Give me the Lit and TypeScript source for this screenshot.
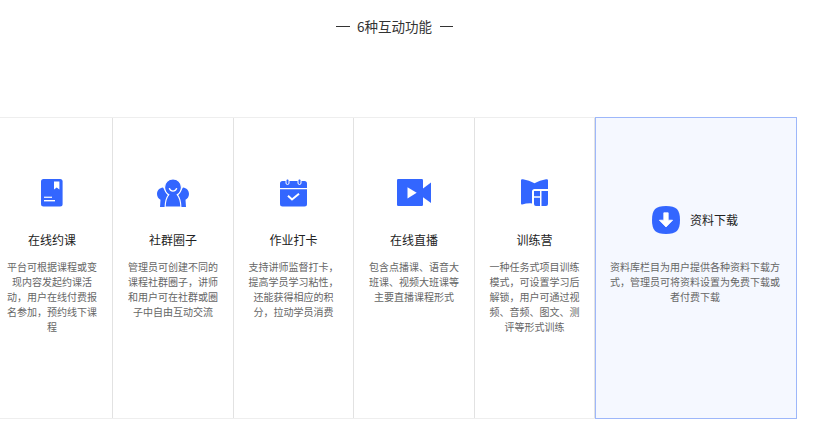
import { LitElement, html, css } from "lit";
import { customElement } from "lit/decorators.js";

const B = "#3366ff";

const icons = {
  book: html`<svg class="ic" width="22" height="28" viewBox="0 0 22 28">
    <rect x="0" y="0" width="21.6" height="27.5" rx="2.5" fill="${B}"></rect>
    <path d="M13 2.500h5.400v8l-2.700-2-2.700 2z" fill="#fff"></path>
    <rect x="3" y="17.600" width="8" height="1.400" fill="#e3eaff"></rect>
    <rect x="3" y="21" width="11" height="1.400" fill="#fff"></rect>
  </svg>`,
  group: html`<svg class="ic" width="32" height="28" viewBox="0 0 32 28">
    <path d="M6 8.500C2.500 8.800 0 11.600 0 15c0 2.600 1.400 4.700 3.500 5.800L3 28h8l1-10z" fill="${B}"></path>
    <path d="M26 8.500c3.500.3 6 3.100 6 6.500 0 2.600-1.400 4.700-3.500 5.800L29 28h-8l-1-10z" fill="${B}"></path>
    <path d="M16 0c4.800 0 8.400 3.700 8.400 8.200 0 3.300-1.700 6-4.200 7.500 2.100 2.500 3.500 6.800 3.700 12.300H8.100c.2-5.500 1.600-9.800 3.700-12.300-2.500-1.500-4.200-4.200-4.200-7.500C7.600 3.700 11.200 0 16 0z" fill="${B}" stroke="#fff" stroke-width="1.100"></path>
    <path d="M12.400 9.600c.7 1.700 2 2.500 3.600 2.500s2.900-.8 3.600-2.500" fill="none" stroke="#fff" stroke-width="1.300" stroke-linecap="round"></path>
  </svg>`,
  calendar: html`<svg class="ic" width="27" height="28" viewBox="0 0 27 28">
    <path d="M2.500 2h22A2.500 2.500 0 0 1 27 4.500V9H0V4.500A2.500 2.500 0 0 1 2.500 2z" fill="${B}"></path>
    <path d="M0 10.200h27V25a2.500 2.500 0 0 1-2.500 2.500h-22A2.500 2.500 0 0 1 0 25z" fill="${B}"></path>
    <rect x="6" y="0" width="3" height="5.500" rx="1.500" fill="${B}" stroke="#fff" stroke-width="1"></rect>
    <rect x="18" y="0" width="3" height="5.500" rx="1.500" fill="${B}" stroke="#fff" stroke-width="1"></rect>
    <path d="M8 16.800l4 3.700 7-5.800" fill="none" stroke="#fff" stroke-width="2"></path>
  </svg>`,
  video: html`<svg class="ic" width="34" height="28" viewBox="0 0 34 28">
    <rect x="0" y="0" width="26" height="27" rx="1.200" fill="${B}"></rect>
    <path d="M25 10.200L34 3.500v20.500l-9-6.500z" fill="${B}"></path>
    <path d="M10.500 8.200l9.200 5.600-9.200 5.600z" fill="#fff"></path>
  </svg>`,
  map: html`<svg class="ic" width="27" height="28" viewBox="0 0 27 28">
    <path d="M0 1.500C0 .3 1 0 2 .3c4 .8 8 2 11.500 4C17 2.300 21 1.100 25 .3c1-.3 2 0 2 1.200V10H13.500c-1.500 0-2.500 1-2.500 2.500V24.500C7.800 24 4.500 24.700 1.200 25.500.5 25.700 0 25 0 24.200z" fill="${B}"></path>
    <path d="M13 12h6v5.200h-6zM20.500 12H27v13a2 2 0 0 1-2 2h-4.500zM13 18.800h6V27h-4a2 2 0 0 1-2-2z" fill="${B}"></path>
  </svg>`,
  download: html`<svg class="ic" width="28" height="28" viewBox="0 0 28 28">
    <path d="M14 0c10.500 0 14 3.500 14 14s-3.500 14-14 14S0 24.500 0 14 3.500 0 14 0z" fill="${B}"></path>
    <path d="M11.800 6.800h4.400v7.400h4.400L14 21 7.400 14.200h4.400z" fill="#fff" stroke="#fff" stroke-linejoin="round" stroke-width="0.800"></path>
  </svg>`,
};

const items = [
  { icon: icons.book, title: "在线约课", desc: "平台可根据课程或变现内容发起约课活动，用户在线付费报名参加，预约线下课程" },
  { icon: icons.group, title: "社群圈子", desc: "管理员可创建不同的课程社群圈子，讲师和用户可在社群或圈子中自由互动交流" },
  { icon: icons.calendar, title: "作业打卡", desc: "支持讲师监督打卡，提高学员学习粘性，还能获得相应的积分，拉动学员消费" },
  { icon: icons.video, title: "在线直播", desc: "包含点播课、语音大班课、视频大班课等主要直播课程形式" },
  { icon: icons.map, title: "训练营", desc: "一种任务式项目训练模式，可设置学习后解锁，用户可通过视频、音频、图文、测评等形式训练" },
];

@customElement("app-root")
export class AppRoot extends LitElement {
  static styles = css`
    :host {
      display: block;
      width: 828px;
      height: 421px;
      overflow: hidden;
      background: #fff;
      font-family: "Noto Sans CJK SC", "Noto Sans", sans-serif;
    }
    .section {
      width: 805px;
      margin-left: -8px;
    }
    .heading {
      height: 117px;
      padding-top: 15px;
      box-sizing: border-box;
      display: flex;
      justify-content: center;
      align-items: flex-start;
      gap: 7.5px;
      font-size: 13.5px;
      line-height: 22px;
      color: #333;
    }
    .dash {
      width: 13.500px;
      height: 1px;
      margin-top: 11px;
      background: #333;
    }
    .row {
      display: grid;
      grid-template-columns: 121px 121px 120px 121px 120px 202px;
      height: 302px;
      border-top: 1px solid #eee;
      border-bottom: 1px solid #eee;
      box-sizing: border-box;
    }
    .card {
      box-sizing: border-box;
      border-right: 1px solid #e2e2e2;
      display: flex;
      flex-direction: column;
      align-items: center;
      padding: 61px 15px 0;
    }
    .ic {
      display: block;
      flex: none;
    }
    .name {
      margin-top: 24px;
      font-size: 12px;
      line-height: 18px;
      color: #222;
    }
    .desc {
      margin-top: 10px;
      font-size: 10px;
      line-height: 15px;
      color: #666;
      text-align: center;
      width: 91px;
    }
    .active {
      margin: -1px 0;
      background: #f5f8ff;
      border: 1px solid #9db7fa;
      padding: 88px 16px 0 14px;
    }
    .head {
      display: flex;
      align-items: center;
      gap: 10px;
    }
    .head .name {
      margin-top: 0;
    }
    .active .desc {
      width: 172px;
      margin-top: 25px;
    }
  `;

  render() {
    return html`<div class="section">
      <div class="heading">
        <span class="dash"></span>
        <span>6种互动功能</span>
        <span class="dash"></span>
      </div>
      <div class="row">
        ${items.map(
          (i) => html`<div class="card">
            ${i.icon}
            <div class="name">${i.title}</div>
            <div class="desc">${i.desc}</div>
          </div>`
        )}
        <div class="card active">
          <div class="head">
            ${icons.download}
            <div class="name">资料下载</div>
          </div>
          <div class="desc">资料库栏目为用户提供各种资料下载方式，管理员可将资料设置为免费下载或者付费下载</div>
        </div>
      </div>
    </div>`;
  }
}
